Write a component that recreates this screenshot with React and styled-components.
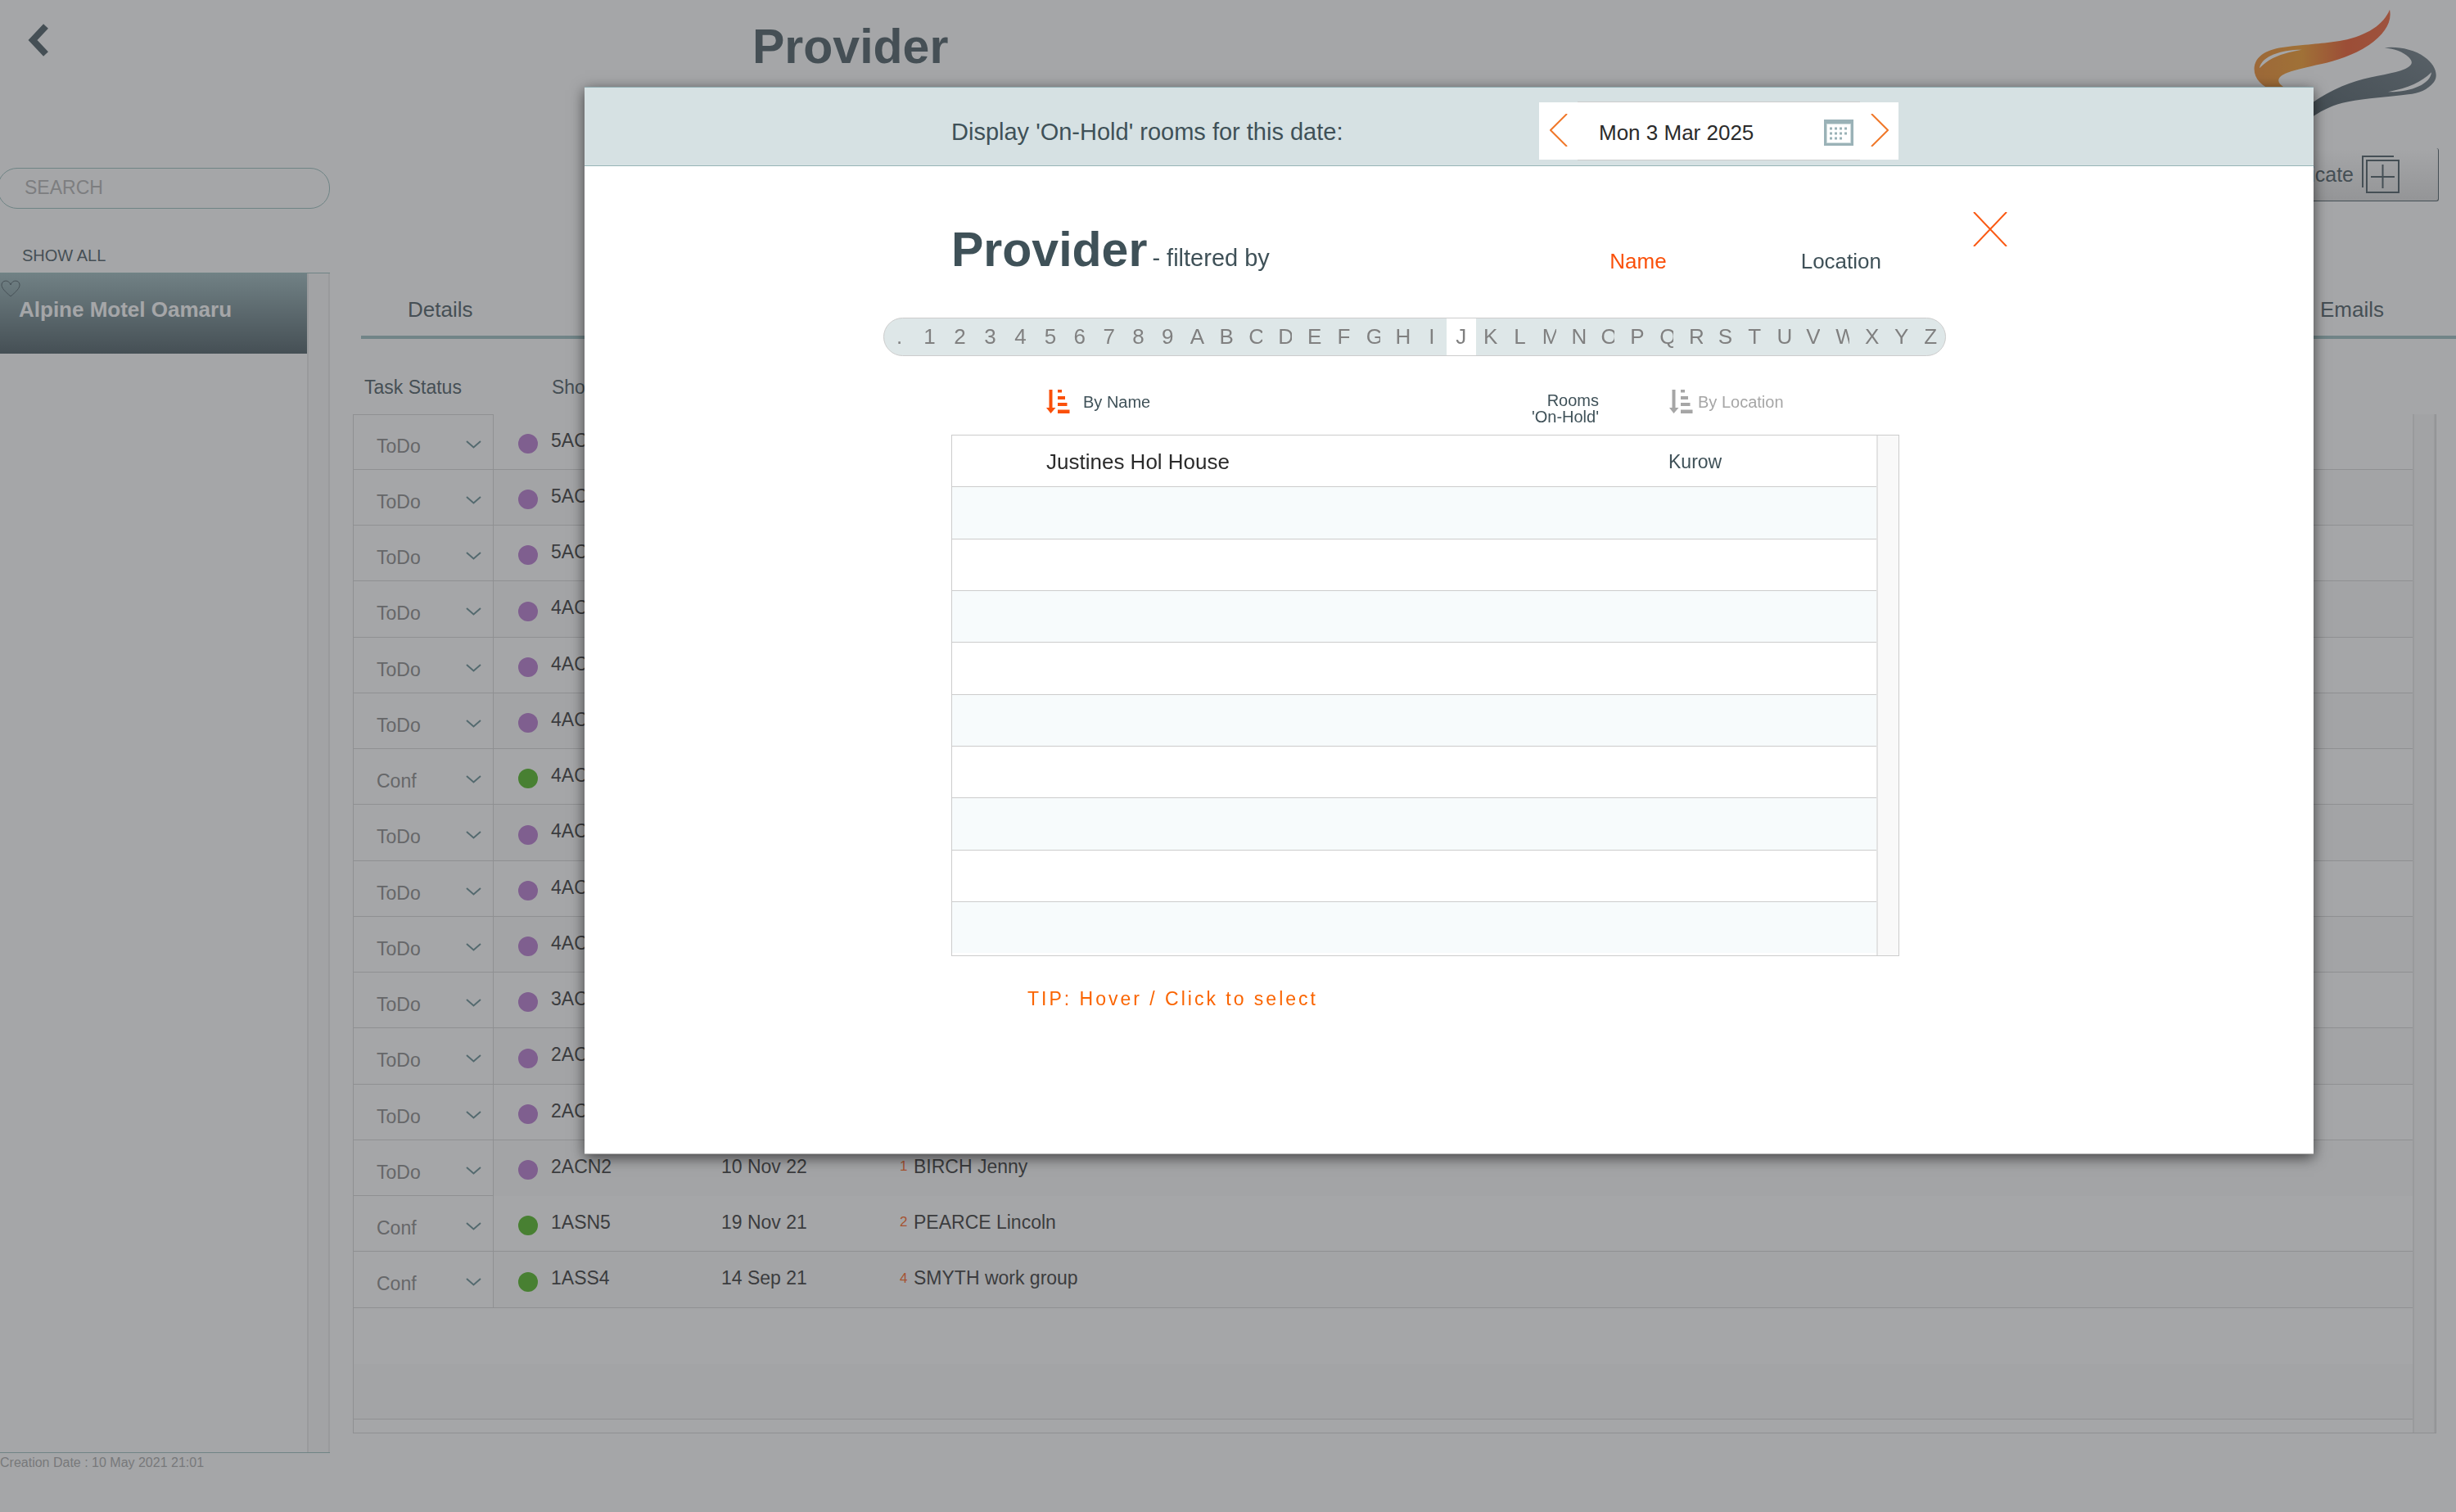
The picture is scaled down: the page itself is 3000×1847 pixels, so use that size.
import React from 'react'
import styled, { createGlobalStyle } from 'styled-components'

const bookings = [
    { status: 'ToDo', code: '5AC' },
    { status: 'ToDo', code: '5AC' },
    { status: 'ToDo', code: '5AC' },
    { status: 'ToDo', code: '4AC' },
    { status: 'ToDo', code: '4AC' },
    { status: 'ToDo', code: '4AC' },
    { status: 'Conf', code: '4AC' },
    { status: 'ToDo', code: '4AC' },
    { status: 'ToDo', code: '4AC' },
    { status: 'ToDo', code: '4AC' },
    { status: 'ToDo', code: '3AC' },
    { status: 'ToDo', code: '2AC' },
    { status: 'ToDo', code: '2AC' },
    { status: 'ToDo', code: '2ACN2', date: '10 Nov 22', count: 1, name: 'BIRCH Jenny', open: true },
    { status: 'Conf', code: '1ASN5', date: '19 Nov 21', count: 2, name: 'PEARCE Lincoln' },
    { status: 'Conf', code: '1ASS4', date: '14 Sep 21', count: 4, name: 'SMYTH work group' },
    { open: true },
    {},
]

const providers = [{ name: 'Justines Hol House', location: 'Kurow' }, {}, {}, {}, {}, {}, {}, {}, {}, {}]

const letters = '.123456789ABCDEFGHIJKLMNOPQRSTUVWXYZ'.split('')

const SortIcon = () => (
    <svg width="29" height="29" viewBox="0 0 29 29" fill="currentColor" aria-hidden="true">
        <path d="M3.5 0h4v22H11.500L5.500 29L0 22h3.500z" />
        <path d="M14 0h5v3.500h-5zM14 8h9v4h-9zM14 16h11.500v4H14zM14 24.500h14.500V29H14z" />
    </svg>
)

const Logo = () => (
    <svg width="240" height="145" viewBox="0 0 720 435" role="img" aria-label="Logo">
        <defs>
            <linearGradient id="flame" x1="0" y1="0" x2="1" y2="0">
                <stop offset="0" stopColor="#ee8420" />
                <stop offset="0.35" stopColor="#f4941c" />
                <stop offset="0.68" stopColor="#ec4e1c" />
                <stop offset="1" stopColor="#f0582a" />
            </linearGradient>
            <linearGradient id="slate" x1="0" y1="1" x2="1" y2="0">
                <stop offset="0" stopColor="#3a4a52" />
                <stop offset="1" stopColor="#66757e" />
            </linearGradient>
        </defs>
        <path fill="url(#flame)" d="M522 20C532 66 502 112 446 150C385 190 325 207 270 220C220 231 180 240 148 251C108 266 106 285 132 303L150 320H100C50 300 22 270 26 230C34 180 90 162 150 156C240 146 290 144 350 133C440 114 500 75 522 20Z" />
        <path fill="#fff" d="M45 235C52 192 120 167 200 167C140 178 84 192 45 235Z" />
        <path fill="url(#slate)" d="M503 160C545 154 610 164 650 194C690 222 702 262 684 286C660 315 630 328 590 331C530 340 430 345 370 358C310 370 280 388 243 410L190 440V400C250 345 330 303 400 282C470 262 540 255 578 238C606 224 609 212 592 195C570 174 540 165 503 160Z" />
        <path fill="#fff" d="M675 250C672 294 598 324 516 322C590 308 640 285 675 250Z" />
    </svg>
)

const Chevron = () => (
    <svg width="19" height="10" viewBox="0 0 19 10" fill="none" stroke="#5c868c" strokeWidth="2" aria-hidden="true">
        <path d="M1 1L9.500 8.500L18 1" />
    </svg>
)

const App = () => {
    return (
        <>
            <GlobalStyle />
            <Page>
                <TopBar>
                    <BackButton aria-label="Back">
                        <svg width="25" height="40" viewBox="0 0 25 40" fill="none" stroke="currentColor" strokeWidth="8">
                            <path d="M22 3L6 20L22 37" />
                        </svg>
                    </BackButton>
                    <PageTitle>Provider</PageTitle>
                    <Logo />
                </TopBar>
                <Columns>
                    <Sidebar>
                        <Search aria-label="Search" placeholder="SEARCH" />
                        <ShowAll>SHOW ALL</ShowAll>
                        <ProviderList>
                            <ProviderItems>
                                <ProviderItem>
                                    <Heart width="24" height="22" viewBox="0 0 24 22" fill="none" stroke="#3f5158" aria-hidden="true">
                                        <path d="M12 20C5 14 1 10 1 6C1 0 10 -1 12 6C14 -1 23 0 23 6C23 10 19 14 12 20Z" />
                                    </Heart>
                                    Alpine Motel Oamaru
                                </ProviderItem>
                            </ProviderItems>
                            <Track />
                        </ProviderList>
                        <Created>Creation Date : 10 May 2021 21:01</Created>
                    </Sidebar>
                    <Main>
                        <Actions>
                            <DuplicateButton>
                                Duplicate
                                <svg width="46" height="46" viewBox="0 0 46 46" fill="none" stroke="currentColor" strokeWidth="2" aria-hidden="true">
                                    <path d="M1 39V1H39M6 6H45V45H6zM11 26H40M25.500 11V40" />
                                </svg>
                            </DuplicateButton>
                        </Actions>
                        <Tabs>
                            <Tab href="#details">Details</Tab>
                            <Tab href="#emails">Emails</Tab>
                        </Tabs>
                        <BookingHeads>
                            <span>Task Status</span>
                            <span>Shortcode</span>
                        </BookingHeads>
                        <BookingBox>
                            <BookingTable>
                                <colgroup>
                                    <col width="171" />
                                    <col width="70" />
                                    <col width="208" />
                                    <col width="218" />
                                    <col width="17" />
                                    <col />
                                </colgroup>
                                <tbody>
                                    {bookings.map((b, i) => (
                                        <BookingRow key={i} $open={b.open}>
                                            {b.status ? (
                                                <>
                                                    <StatusCell>
                                                        <SelectWrap>
                                                            <Select aria-label={`Task status ${i + 1}`} defaultValue={b.status}>
                                                                <option>ToDo</option>
                                                                <option>Conf</option>
                                                            </Select>
                                                            <Chevron />
                                                        </SelectWrap>
                                                    </StatusCell>
                                                    <DotCell><Dot $done={b.status === 'Conf'} /></DotCell>
                                                    <td>{b.code}</td>
                                                    <td>{b.date}</td>
                                                    <CountCell>{b.count}</CountCell>
                                                    <td>{b.name}</td>
                                                </>
                                            ) : (
                                                <td colSpan="6" />
                                            )}
                                        </BookingRow>
                                    ))}
                                </tbody>
                            </BookingTable>
                            <Track />
                        </BookingBox>
                    </Main>
                </Columns>
            </Page>

            <Overlay>
                <Modal role="dialog" aria-label="Provider filter">
                    <ModalHeader>
                        <label htmlFor="hold-date">Display 'On-Hold' rooms for this date:</label>
                        <DateBox>
                            <Arrow aria-label="Previous day">
                                <svg width="22" height="40" viewBox="0 0 22 40" fill="none" stroke="#f0782a" strokeWidth="2">
                                    <path d="M21 0L1 20L21 40" />
                                </svg>
                            </Arrow>
                            <DateField>
                                <DateInput id="hold-date" defaultValue="Mon 3 Mar 2025" />
                                <CalendarButton aria-label="Open calendar">
                                    <svg width="36" height="32" viewBox="0 0 36 32">
                                        <path fill="#9ab2b7" d="M0 0H36V32H0z" />
                                        <path fill="#fff" stroke="#cfdcde" d="M3.500 5.500H32.500V28.500H3.500z" />
                                        <path stroke="#9ab2b7" strokeWidth="3" strokeDasharray="3 3" d="M7 11H29M7 17H29M7 23H23" />
                                    </svg>
                                </CalendarButton>
                            </DateField>
                            <Arrow aria-label="Next day">
                                <svg width="22" height="40" viewBox="0 0 22 40" fill="none" stroke="#f0782a" strokeWidth="2">
                                    <path d="M1 0L21 20L1 40" />
                                </svg>
                            </Arrow>
                        </DateBox>
                    </ModalHeader>
                    <ModalBody>
                        <Content>
                            <TitleRow>
                                <h2>Provider</h2>
                                <span>- filtered by</span>
                                <Filters>
                                    <FilterButton $active>Name</FilterButton>
                                    <FilterButton>Location</FilterButton>
                                </Filters>
                            </TitleRow>
                            <Alphabet>
                                {letters.map((l) => (
                                    <Letter key={l} $active={l === 'J'}><span>{l}</span></Letter>
                                ))}
                            </Alphabet>
                            <ResultHeads>
                                <SortButton $active><SortIcon />By Name</SortButton>
                                <RoomsHead>Rooms<br />'On-Hold'</RoomsHead>
                                <SortButton><SortIcon />By Location</SortButton>
                            </ResultHeads>
                            <ResultBox>
                                <ResultTable>
                                    <tbody>
                                        {providers.map((p, i) => (
                                            <tr key={i}>
                                                <NameCell>{p.name}</NameCell>
                                                <LocationCell>{p.location}</LocationCell>
                                            </tr>
                                        ))}
                                    </tbody>
                                </ResultTable>
                                <ResultTrack />
                            </ResultBox>
                            <Tip>TIP: Hover / Click to select</Tip>
                        </Content>
                        <CloseButton aria-label="Close">
                            <svg width="42" height="42" viewBox="0 0 42 42" stroke="#fa5a14" strokeWidth="2">
                                <path d="M1 0L41 42M41 0L1 42" />
                            </svg>
                        </CloseButton>
                    </ModalBody>
                </Modal>
            </Overlay>
        </>
    )
}

export default App

const GlobalStyle = createGlobalStyle`
* {
    box-sizing: border-box;
}
body {
    margin: 0;
    overflow: hidden;
    font-family: "Liberation Sans", Arial, sans-serif;
    color: #3f5158;
    background: #fff;
}
button, input, select {
    padding: 0;
    border: 0;
    border-radius: 0;
    font-family: inherit;
    color: inherit;
    background: none;
}
svg {
    display: block;
    flex-shrink: 0;
}
`
const Page = styled.div`
min-height: 100vh;
`
const TopBar = styled.header`
display: flex;
align-items: flex-start;
height: 181px;
padding: 5px 15px 0 34px;
svg {
    margin-left: auto;
}
`
const BackButton = styled.button`
width: 25px;
margin: 24px 860px 0 0;
`
const PageTitle = styled.h1`
margin: 18px 0 0;
font-size: 59px;
line-height: 68px;
`
const Columns = styled.div`
display: flex;
`
const Sidebar = styled.aside`
width: 403px;
padding-top: 24px;
`
const Search = styled.input`
display: block;
width: 406px;
height: 50px;
margin-left: -3px;
padding: 0 32px 2px;
border: 1px solid #92bab8;
border-radius: 24px;
font-size: 23px;
&::placeholder {
    color: #aeaeae;
    opacity: 1;
}
`
const ShowAll = styled.button`
display: block;
margin: 44px 0 8px 27px;
font-size: 20px;
line-height: 26px;
`
const ProviderList = styled.div`
display: flex;
height: 1442px;
border-top: 1px solid #92bab8;
border-bottom: 1px solid #92bab8;
`
const ProviderItems = styled.div`
flex: 1;
`
const ProviderItem = styled.button`
position: relative;
width: 100%;
height: 98px;
padding: 0 23px 10px;
font-size: 26px;
font-weight: bold;
text-align: left;
color: #fff;
background: linear-gradient(#96b4b8, #3f5158);
`
const Heart = styled.svg`
position: absolute;
top: 8px;
left: 1px;
`
const Track = styled.div`
width: 28px;
border: solid #e6e6e6;
border-width: 0 2px;
background: #f8f8f8;
`
const Created = styled.p`
margin: 2px 0 0;
font-size: 16px;
line-height: 20px;
color: #a4a4a4;
`
const Main = styled.main`
flex: 1;
padding: 0 24px 0 28px;
`
const Actions = styled.div`
display: flex;
justify-content: flex-end;
margin-right: -3px;
`
const DuplicateButton = styled.button`
display: flex;
align-items: center;
gap: 10px;
height: 65px;
padding: 0 47px;
border-right: 1px solid #3f5158;
border-bottom: 1px solid #3f5158;
border-radius: 3px;
font-size: 25px;
background: linear-gradient(#fff, #dcdcdc);
`
const Tabs = styled.nav`
display: flex;
justify-content: space-between;
margin: 117px -24px 0 10px;
padding: 0 88px 17px 57px;
border-bottom: 4px solid #96babc;
`
const Tab = styled.a`
font-size: 26px;
line-height: 30px;
color: inherit;
text-decoration: none;
`
const BookingHeads = styled.div`
display: flex;
gap: 110px;
padding: 45px 14px 19px;
font-size: 23px;
line-height: 28px;
`
const BookingBox = styled.div`
display: flex;
border: solid #d2d2d2;
border-width: 0 1px 1px;
`
const BookingTable = styled.table`
flex: 1;
align-self: flex-start;
table-layout: fixed;
border-collapse: separate;
border-spacing: 0;
margin-bottom: 16px;
font-size: 23px;
color: #2b2b2b;
td {
    padding: 0 0 3px;
    border-bottom: 1px solid #d2d2d2;
}
`
const BookingRow = styled.tr`
height: 68px;
&:nth-child(4n) {
    height: 69px;
}
&:nth-child(even) {
    background: #fafafa;
}
td {
    border-bottom-color: ${(p) => (p.$open ? 'transparent' : '#d2d2d2')};
}
`
const StatusCell = styled.td`
&& {
    height: 1px;
    padding: 0;
    border: solid #d2d2d2;
    border-width: 0 1px 1px 0;
    background: #fff;
}
tr:first-child > && {
    border-top-width: 1px;
}
`
const SelectWrap = styled.div`
display: grid;
align-items: center;
height: 66px;
svg {
    grid-area: 1 / 1;
    justify-self: end;
    margin: 6px 14px 0 0;
    pointer-events: none;
}
`
const Select = styled.select`
grid-area: 1 / 1;
appearance: none;
height: 66px;
padding: 10px 40px 0 28px;
font-size: 23px;
color: #808080;
`
const DotCell = styled.td`
&& {
    padding: 5px 0 0 30px;
}
`
const Dot = styled.div`
width: 24px;
height: 24px;
border-radius: 50%;
background: ${(p) => (p.$done ? '#44b212' : '#b270cc')};
`
const CountCell = styled.td`
font-size: 17px;
color: #ff580c;
`
const Overlay = styled.div`
position: fixed;
inset: 0;
padding: 106px 174px 0 714px;
background: rgba(76, 78, 82, 0.5);
`
const Modal = styled.section`
padding-bottom: 175px;
border-bottom: 1px solid #b4b4b4;
background: #fff;
box-shadow: 0 4px 16px rgba(0, 0, 0, 0.6);
`
const ModalHeader = styled.div`
display: flex;
align-items: center;
justify-content: space-between;
padding: 17px 507px 6px 448px;
border-top: 1px solid #8fabb0;
border-bottom: 1px solid #96b4b6;
font-size: 29px;
background: #d6e1e3;
label {
    padding-top: 3px;
}
`
const DateBox = styled.div`
display: flex;
align-items: center;
width: 439px;
`
const Arrow = styled.button`
display: flex;
align-items: center;
justify-content: center;
flex-shrink: 0;
width: 47px;
height: 70px;
padding-bottom: 2px;
background: #fff;
`
const DateField = styled.div`
display: flex;
align-items: center;
flex: 1;
min-width: 0;
height: 72px;
padding: 4px 8px 0 26px;
border: solid #ccc;
border-width: 1px 0;
background: #fff;
`
const DateInput = styled.input`
flex: 1;
min-width: 0;
font-size: 26px;
color: #2b2b2b;
`
const CalendarButton = styled.button`
flex-shrink: 0;
width: 36px;
`
const ModalBody = styled.div`
display: grid;
grid-template-columns: 1fr 506px;
align-items: start;
padding-left: 448px;
`
const Content = styled.div`
padding-top: 68px;
`
const TitleRow = styled.div`
display: flex;
align-items: baseline;
gap: 6px;
height: 68px;
font-size: 29px;
h2 {
    margin: 0;
    font-size: 59px;
    line-height: 68px;
}
`
const Filters = styled.div`
display: flex;
align-self: flex-end;
gap: 164px;
margin-left: auto;
padding: 0 22px 5px 0;
`
const FilterButton = styled.button`
font-size: 26px;
line-height: 30px;
color: ${(p) => (p.$active ? '#fa500a' : '#3f5158')};
`
const Alphabet = styled.div`
display: flex;
height: 47px;
margin: 49px -57px 0 -83px;
overflow: hidden;
border: 1px solid #ccc;
border-radius: 24px;
background: #dee7e8;
`
const Letter = styled.button`
display: flex;
align-items: center;
justify-content: center;
flex: 1;
font-size: 26px;
color: #808080;
background: ${(p) => (p.$active ? '#fff' : 'none')};
&:nth-child(-n + 5) {
    flex: 0 0 37px;
}
span {
    max-width: 17px;
    overflow: hidden;
}
`
const ResultHeads = styled.div`
display: grid;
grid-template-columns: 1fr 200px 367px;
align-items: start;
height: 96px;
padding: 41px 0 0 116px;
`
const SortButton = styled.button`
display: flex;
align-items: center;
gap: ${(p) => (p.$active ? 16 : 6)}px;
margin-left: ${(p) => (p.$active ? 0 : 86)}px;
font-size: 20px;
line-height: 20px;
color: ${(p) => (p.$active ? '#3f5158' : '#a6a6a6')};
svg {
    color: ${(p) => (p.$active ? '#fa500a' : '#a6a6a6')};
}
`
const RoomsHead = styled.div`
padding-top: 3px;
font-size: 20px;
line-height: 20px;
text-align: right;
`
const ResultBox = styled.div`
display: flex;
border: 1px solid #ccc;
`
const ResultTable = styled.table`
flex: 1;
align-self: flex-start;
table-layout: fixed;
border-collapse: separate;
border-spacing: 0;
margin-bottom: 3px;
td {
    height: 63px;
    border-bottom: 1px solid #ccc;
}
tr:nth-child(3n + 2) td {
    height: 64px;
}
tr:nth-child(even) td {
    background: #f7fbfc;
}
tr:last-child td {
    height: 62px;
    border-bottom: 0;
}
`
const NameCell = styled.td`
padding: 2px 0 0 115px;
font-size: 26px;
color: #2b2b2b;
`
const LocationCell = styled.td`
width: 254px;
padding: 2px 0 0;
font-size: 23px;
`
const ResultTrack = styled.div`
width: 27px;
border-left: 2px solid #e3e3e3;
background: #f9f9f9;
`
const Tip = styled.p`
margin: 38px 0 0 93px;
font-size: 23px;
line-height: 28px;
letter-spacing: 3px;
color: #fa6400;
`
const CloseButton = styled.button`
width: 42px;
margin: 56px 0 0 90px;
`
